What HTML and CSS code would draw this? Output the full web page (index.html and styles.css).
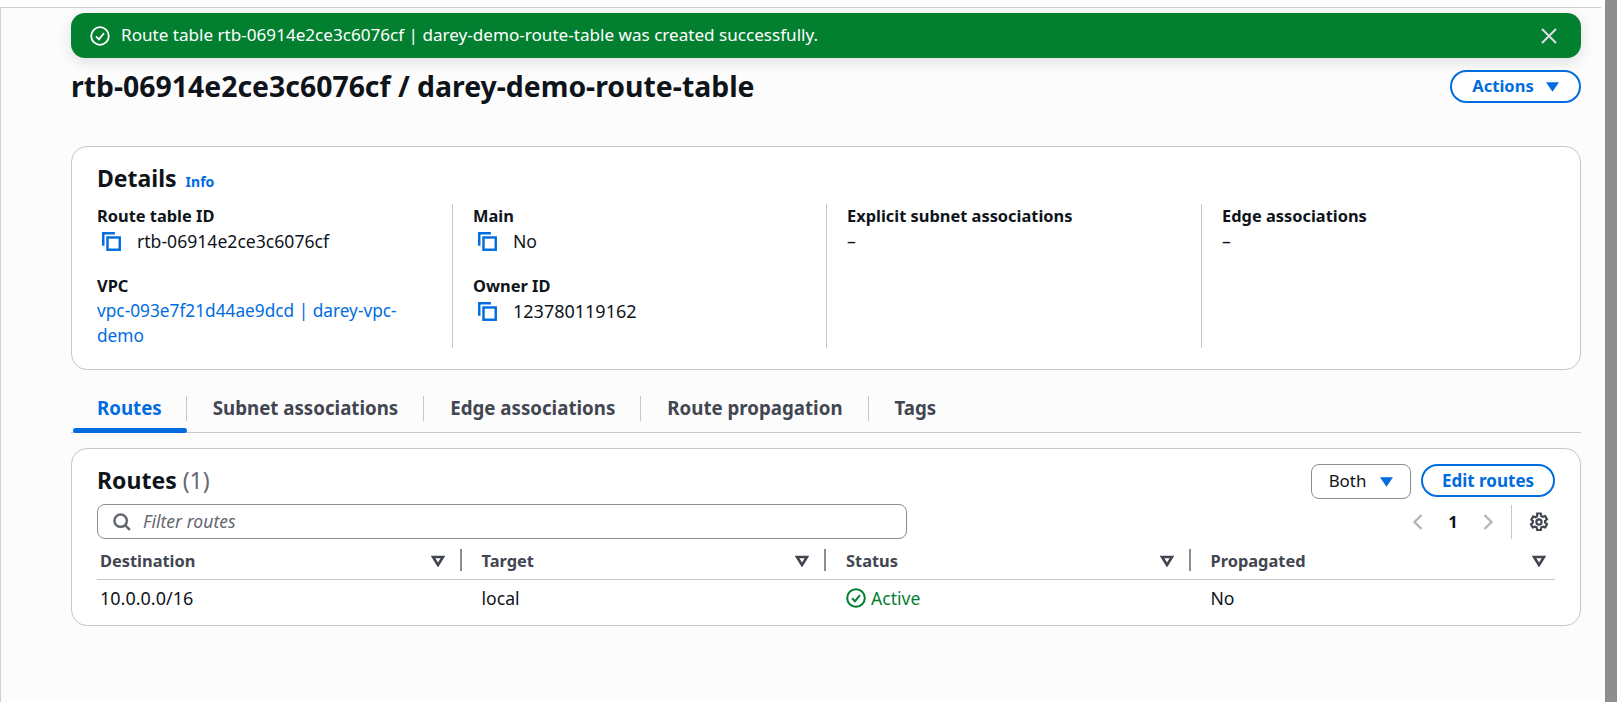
FILE: index.html
```html
<!DOCTYPE html>
<html lang="en">
<head>
<meta charset="utf-8">
<title>Route table</title>
<link rel="stylesheet" href="styles.css">
</head>
<body>
<div class="window">
  <main class="page">
    <div class="flash">
      <svg class="flash-icon" viewBox="0 0 20 20"><circle cx="10" cy="10" r="8.8"/><path d="M6 10.3l3 3 5-6.2"/></svg>
      <span class="flash-text">Route table rtb-06914e2ce3c6076cf | darey-demo-route-table was created successfully.</span>
      <svg class="flash-close" viewBox="0 0 16 16"><path d="M1 1l14 14M15 1L1 15"/></svg>
    </div>
    <header class="page-head">
      <h1>rtb-06914e2ce3c6076cf / darey-demo-route-table</h1>
      <button class="btn btn-actions"><span class="btn-label">Actions</span> <svg class="caret" viewBox="0 0 14 10"><path d="M0 0h14L7 10z"/></svg></button>
    </header>

    <section class="card details">
      <h2 class="details-title">Details <a class="info">Info</a></h2>
      <div class="details-grid">
        <div class="col">
          <div class="label">Route table ID</div>
          <div class="copy"><svg class="copy-icon" viewBox="0 0 18 18"><path d="M1.2 13V1.2h11"/><rect x="5.2" y="5.2" width="11.6" height="11.6"/></svg><span>rtb-06914e2ce3c6076cf</span></div>
          <div class="label label-second">VPC</div>
          <a class="link">vpc-093e7f21d44ae9dcd | darey-vpc-demo</a>
        </div>
        <div class="col">
          <div class="label">Main</div>
          <div class="copy"><svg class="copy-icon" viewBox="0 0 18 18"><path d="M1.2 13V1.2h11"/><rect x="5.2" y="5.2" width="11.6" height="11.6"/></svg><span>No</span></div>
          <div class="label label-second">Owner ID</div>
          <div class="copy"><svg class="copy-icon" viewBox="0 0 18 18"><path d="M1.2 13V1.2h11"/><rect x="5.2" y="5.2" width="11.6" height="11.6"/></svg><span class="num">123780119162</span></div>
        </div>
        <div class="col">
          <div class="label">Explicit subnet associations</div>
          <div class="dash">–</div>
        </div>
        <div class="col">
          <div class="label">Edge associations</div>
          <div class="dash">–</div>
        </div>
      </div>
    </section>

    <nav class="tabs">
      <a class="tab tab-active">Routes</a>
      <a class="tab">Subnet associations</a>
      <a class="tab">Edge associations</a>
      <a class="tab">Route propagation</a>
      <a class="tab">Tags</a>
    </nav>

    <section class="card routes">
      <div class="routes-head">
        <h2 class="routes-title">Routes <span class="count">(1)</span></h2>
        <div class="routes-actions">
          <button class="btn-select"><span class="btn-label">Both</span> <svg class="caret" viewBox="0 0 14 10"><path d="M0 0h14L7 10z"/></svg></button>
          <button class="btn btn-edit">Edit routes</button>
        </div>
      </div>
      <div class="tools">
        <div class="filter">
          <svg class="search" viewBox="0 0 16 16"><circle cx="6.8" cy="6.8" r="5.5"/><path d="M10.7 10.7L15 15"/></svg>
          <span class="btn-label">Filter routes</span>
        </div>
        <div class="pager">
          <svg class="chev" viewBox="0 0 10 16"><path d="M9 1L2 8l7 7"/></svg>
          <b>1</b>
          <svg class="chev" viewBox="0 0 10 16"><path d="M1 1l7 7-7 7"/></svg>
          <span class="pager-sep"></span>
          <svg class="gear" viewBox="0 0 20 20"><path d="M8.2 1.5h3.6l.5 2.5 1.5.9 2.4-.8 1.8 3.1-1.9 1.7v1.7l1.9 1.7-1.8 3.1-2.4-.8-1.5.9-.5 2.5H8.2l-.5-2.5-1.5-.9-2.4.8-1.8-3.1 1.9-1.7V9.2L2.4 7.5l1.8-3.1 2.4.8 1.5-.9z"/><circle cx="10" cy="10" r="2.6"/></svg>
        </div>
      </div>
      <div class="table">
        <div class="th"><span>Destination</span><svg class="sort" viewBox="0 0 14 12"><path d="M2 2h10L7 10z"/></svg></div>
        <div class="th"><span>Target</span><svg class="sort" viewBox="0 0 14 12"><path d="M2 2h10L7 10z"/></svg></div>
        <div class="th"><span>Status</span><svg class="sort" viewBox="0 0 14 12"><path d="M2 2h10L7 10z"/></svg></div>
        <div class="th th-last"><span>Propagated</span><svg class="sort" viewBox="0 0 14 12"><path d="M2 2h10L7 10z"/></svg></div>
        <div class="td td-first"><span class="num">10.0.0.0/16</span></div>
        <div class="td">local</div>
        <div class="td td-status"><svg class="ok" viewBox="0 0 20 20"><circle cx="10" cy="10" r="8.8"/><path d="M6 10.2l3 3 5-6"/></svg>Active</div>
        <div class="td td-last">No</div>
      </div>
    </section>
  </main>
  <div class="scrollbar"></div>
</div>
</body>
</html>
```
FILE: styles.css
```css
* { box-sizing: border-box; }
html, body { margin: 0; height: 100%; overflow: hidden; }
body {
  font-family: "Noto Sans", "Open Sans", sans-serif;
  font-size: 17.6px;
  color: #0f141a;
  background: #fff;
}
.window { display: flex; height: 702px; }
.page {
  width: 1605px;
  margin-top: 7px;
  padding: 5px 24px 0 70px;
  background: #fcfcfd;
  border-top: 1px solid #d0d0d4;
  border-left: 1px solid #d0d0d4;
  position: relative;
}
.page::after {
  content: "";
  position: absolute;
  top: -1px;
  right: 0;
  width: 4px;
  height: 1px;
  background: #fff;
}
.scrollbar { width: 12px; background: #8e8e8e; }
.num { font-size: 18px; }
.btn-label { margin-bottom: 2px; }

.flash {
  display: flex;
  align-items: center;
  height: 45px;
  padding: 0 24px 0 19px;
  color: #fff;
  background: #037f30;
  border-radius: 14px;
  box-shadow: 0 4px 14px rgba(0, 7, 22, .12);
}
.flash-icon { width: 20px; height: 20px; fill: none; stroke: #fff; stroke-width: 1.8; flex: none; }
.flash-text { margin: 0 0 2px 11px; flex: 1; font-size: 17.1px; }
.flash-close { width: 16px; height: 16px; fill: none; stroke: #dedee3; stroke-width: 2; flex: none; }

.page-head {
  display: flex;
  justify-content: space-between;
  align-items: center;
  margin-top: 11px;
  height: 33px;
}
h1 { margin: 0; font-size: 28.4px; font-weight: 700; line-height: 32px; }
.btn {
  height: 33px;
  border: 2px solid #006ce0;
  border-radius: 20px;
  background: #fff;
  color: #006ce0;
  font: 700 16.5px "Noto Sans", sans-serif;
  padding: 0;
}
.btn-actions {
  display: flex;
  align-items: center;
  justify-content: center;
  gap: 12px;
  width: 131px;
  margin-top: 2px;
}
.caret { width: 13px; height: 10px; fill: #006ce0; }

.card {
  background: #fff;
  border: 1px solid #c6c6cd;
  border-radius: 16px;
}
.details {
  height: 224px;
  margin-top: 44px;
  padding: 15px 25px 0;
}
.details-title { margin: 0; font-size: 23px; line-height: 32px; font-weight: 700; }
.info { font-size: 14px; color: #006ce0; margin-left: 3px; }
.details-grid {
  display: grid;
  grid-template-columns: 376px 374px 375px 375px;
  margin-top: 6px;
}
.col {
  height: 144px;
  border-right: 1px solid #c6c6cd;
  padding-right: 35px;
  margin-right: 20px;
}
.col:last-child { border-right: 0; }
.label { font-weight: 700; font-size: 16.4px; line-height: 24px; height: 24px; }
.label-second { margin-top: 20px; }
.copy { display: flex; align-items: center; height: 26px; }
.copy-icon {
  width: 19px;
  height: 19px;
  margin-left: 5px;
  margin-right: 16px;
  fill: none;
  stroke: #006ce0;
  stroke-width: 2.3;
  flex: none;
}
.link { display: block; color: #006ce0; font-size: 17.25px; line-height: 25px; }
.dash { line-height: 26px; }

.tabs {
  display: flex;
  align-items: stretch;
  height: 43px;
  margin-top: 20px;
  padding-left: 2px;
  border-bottom: 1px solid #c6c6cd;
  font-weight: 700;
  font-size: 18.7px;
  color: #424650;
}
.tab {
  position: relative;
  padding: 5px 26px 0;
  height: 42px;
}
.tab::after {
  content: "";
  position: absolute;
  right: 0;
  top: 6px;
  height: 25px;
  width: 1px;
  background: #c6c6cd;
}
.tab:last-child::after { display: none; }
.tab-active { color: #006ce0; padding: 5px 25px 0 24px; }
.tab-active::before {
  content: "";
  position: absolute;
  left: 0;
  right: 0;
  bottom: -1px;
  height: 5px;
  border-radius: 3px;
  background: #006ce0;
}

.routes {
  height: 178px;
  margin-top: 15px;
  padding: 15px 25px 0;
}
.routes-head { display: flex; justify-content: space-between; align-items: flex-start; height: 40px; }
.routes-title { margin: 0; font-size: 23px; line-height: 32px; font-weight: 700; }
.count { font-weight: 400; color: #656871; }
.routes-actions { display: flex; gap: 10px; }
.btn-select {
  display: flex;
  align-items: center;
  gap: 14px;
  justify-content: center;
  width: 100px;
  height: 35px;
  border: 1px solid #8c8c94;
  border-radius: 8px;
  background: #fff;
  color: #0f141a;
  font: 400 16.9px "Noto Sans", sans-serif;
  padding: 0;
}
.btn-edit { width: 134px; font-size: 17px; }

.tools { display: flex; justify-content: space-between; align-items: center; height: 35px; }
.filter {
  display: flex;
  align-items: center;
  width: 810px;
  height: 35px;
  border: 1px solid #8c8c94;
  border-radius: 8px;
  padding-left: 15px;
  font-style: italic;
  color: #656871;
}
.search { width: 18px; height: 18px; fill: none; stroke: #656871; stroke-width: 2.2; margin-right: 12px; }
.pager { display: flex; align-items: center; height: 34px; }
.pager b { width: 58px; padding-left: 2px; text-align: center; font-size: 16.5px; margin-right: 2px; }
.chev { width: 11px; height: 16px; fill: none; stroke: #b4b4bb; stroke-width: 2.4; }
.pager-sep { width: 1px; height: 34px; background: #c6c6cd; margin: 0 17px; }
.gear { width: 20px; height: 20px; fill: none; stroke: #424650; stroke-width: 2.2; margin-right: 6px; }

.table { display: grid; grid-template-columns: repeat(4, 1fr); margin-top: 3px; }
.th {
  display: flex;
  align-items: center;
  justify-content: space-between;
  height: 38px;
  padding: 0 17px 0 3px;
  border-bottom: 1px solid #c6c6cd;
  font-weight: 700;
  font-size: 16.4px;
  color: #424650;
  position: relative;
}
.th + .th { padding-left: 20px; }
.th::after {
  content: "";
  position: absolute;
  right: 0;
  top: 7px;
  width: 2px;
  height: 22px;
  background: #8c8c94;
}
.th-last::after { display: none; }
.th-last { padding-right: 9px; }
.sort { width: 14px; height: 12px; fill: none; stroke: #424650; stroke-width: 2.6; }
.td { display: flex; align-items: center; height: 36px; padding-left: 20px; }
.td-first { padding-left: 3px; }
.td-last { padding-left: 20px; }
.td-status { color: #037f30; }
.ok { width: 20px; height: 20px; fill: none; stroke: #037f30; stroke-width: 2; margin-right: 5px; }
```
